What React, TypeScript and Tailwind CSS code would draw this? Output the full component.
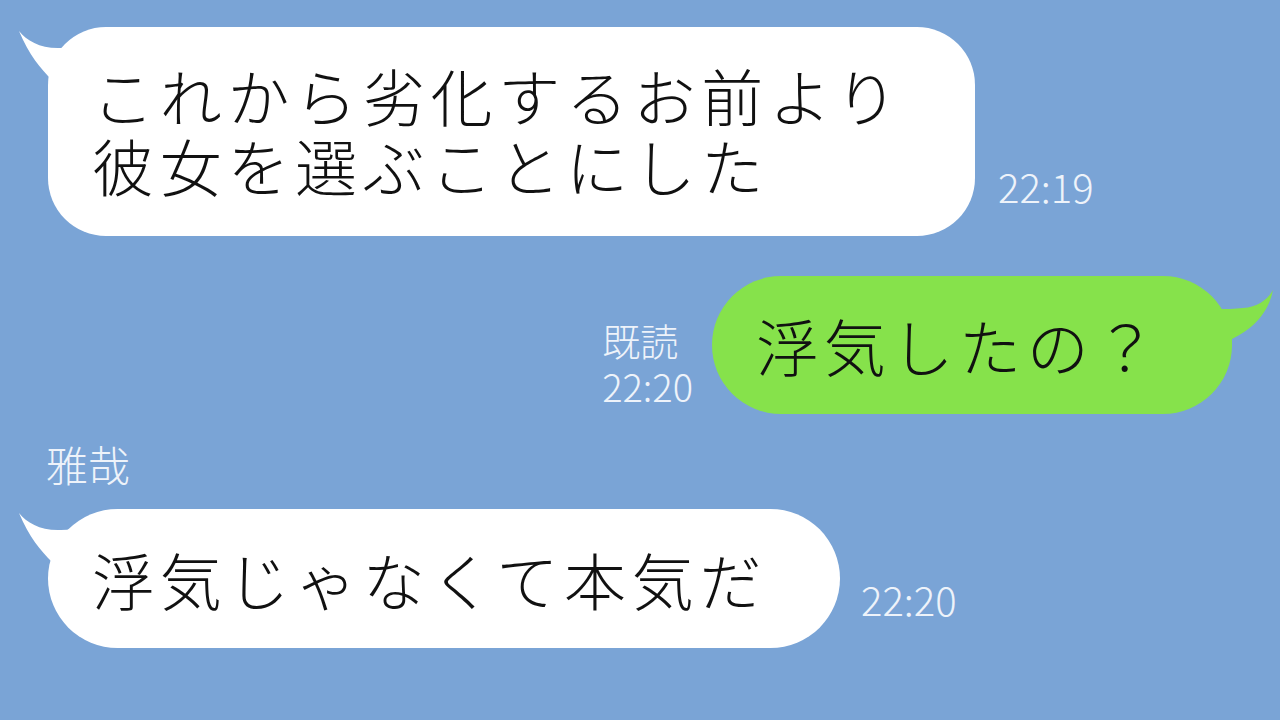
const jp = 'font-["Noto_Sans_CJK_JP_Light","Noto_Sans_CJK_JP","Noto_Sans",sans-serif]';

function LeftTail() {
  return (
    <svg className="absolute left-[-29px] top-0" width="70" height="70" viewBox="0 0 70 70">
      <path d="M0,4 C8,14 22,22 42,21 C50,21 58,19 66,16 L66,70 L33,70 L33,53 C22,42 10,28 0,4 Z" fill="#ffffff" />
    </svg>
  );
}

function RightTail() {
  return (
    <svg className="absolute right-[-43px] top-[9px]" width="62" height="62" viewBox="0 0 62 62">
      <path d="M60,5 C55,14 45,22 30,23 C22,24 14,24 0,24 L0,62 L19,62 L19,54 C38,45 55,30 60,5 Z" fill="#86e24b" />
    </svg>
  );
}

const bubbleText = 'text-[62px] leading-[70px] tracking-[5.7px] text-[#111] font-light whitespace-nowrap';
const timeText = 'text-[40px] leading-[40px] text-[#eef3fa] font-light';

export default function App() {
  return (
    <div className={`w-[1280px] h-[720px] overflow-hidden bg-[#7aa4d6] ${jp}`}>
      {/* 1 */}
      <div className="flex items-end pt-[27px] pl-[48px]">
        <div className="relative w-[927px] h-[209px] rounded-[58px] bg-white flex flex-col justify-center pl-[44px]">
          <LeftTail />
          <p className={`${bubbleText} -mt-[4px]`}>
            これから劣化するお前より
            <br />
            彼女を選ぶことにした
          </p>
        </div>
        <span className={`${timeText} ml-[23px] mb-[30px]`}>22:19</span>
      </div>

      {/* 2 */}
      <div className="flex items-end justify-end pr-[48px] mt-[40px]">
        <p className="mr-[19px] mb-[5px] text-[38px] leading-[46px] text-[#eef3fa] font-light">
          既読
          <br />
          22:20
        </p>
        <div className="relative w-[520px] h-[138px] rounded-full bg-[#86e24b] flex items-center pl-[44px]">
          <RightTail />
          <p className={bubbleText}>浮気したの？</p>
        </div>
      </div>

      {/* 3 */}
      <div className="mt-[29px] pl-[46px] text-[42px] leading-[42px] text-[#eef3fa] font-light">雅哉</div>
      <div className="flex items-end pl-[48px] mt-[24px]">
        <div className="relative w-[792px] h-[139px] rounded-full bg-white flex items-center pl-[44px]">
          <LeftTail />
          <p className={bubbleText}>浮気じゃなくて本気だ</p>
        </div>
        <span className={`${timeText} ml-[21px] mb-[29px]`}>22:20</span>
      </div>
    </div>
  );
}
